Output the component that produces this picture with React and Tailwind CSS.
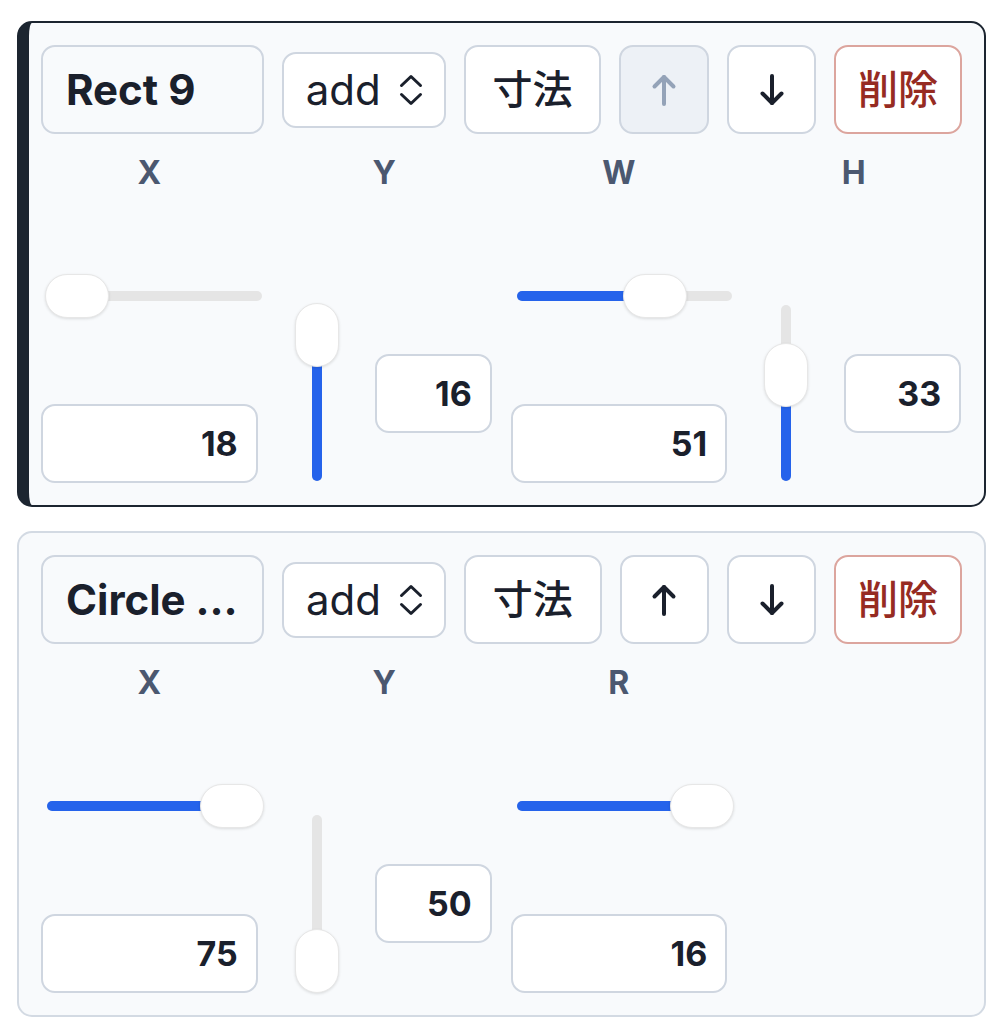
import React from 'react';

const shapes = [
  {
    id: 'rect-9',
    name: 'Rect 9',
    active: true,
    canUp: false,
    fields: [
      { label: 'X', kind: 'h', t: 0, value: 18 },
      { label: 'Y', kind: 'v', t: 1, value: 16 },
      { label: 'W', kind: 'h', t: 0.697, value: 51 },
      { label: 'H', kind: 'v', t: 0.655, value: 33 },
    ],
  },
  {
    id: 'circle-12',
    name: 'Circle 12',
    active: false,
    canUp: true,
    fields: [
      { label: 'X', kind: 'h', t: 1, value: 75 },
      { label: 'Y', kind: 'v', t: 0, value: 50 },
      { label: 'R', kind: 'h', t: 1, value: 16 },
    ],
  },
];

function Arrow({ up }) {
  return (
    <svg width="26" height="34" viewBox="0 0 26 34" fill="none" stroke="currentColor" strokeWidth="4" strokeLinecap="round" strokeLinejoin="round">
      {up ? (
        <>
          <path d="M13 31V4" />
          <path d="M3.5 13.5L13 4l9.5 9.5" />
        </>
      ) : (
        <>
          <path d="M13 3v27" />
          <path d="M3.5 20.5L13 30l9.5-9.5" />
        </>
      )}
    </svg>
  );
}

function UpDown() {
  return (
    <svg width="24" height="32" viewBox="0 0 24 32" fill="none" stroke="currentColor" strokeWidth="3" strokeLinecap="round" strokeLinejoin="round">
      <path d="M2.5 11.5L12 2.5l9.5 9" />
      <path d="M2.5 20.5L12 29.5l9.5-9" />
    </svg>
  );
}

// horizontal range: thumb travels 155px (219 - 64)
function HSlider({ t }) {
  const left = t * 155;
  return (
    <div className="relative ml-[4px] h-[44px] w-[219px]">
      <div className="absolute left-[2px] right-[2px] top-[17px] h-[10px] rounded-full bg-[#e5e5e5]" />
      <div className="absolute left-[2px] top-[17px] h-[10px] rounded-full bg-[#2563eb]" style={{ width: left + 30 }} />
      <div
        className="absolute top-0 h-[44px] w-[64px] rounded-full border border-[#e7e7e7] bg-white shadow-[0_1px_3px_rgba(0,0,0,0.12)]"
        style={{ left }}
      />
    </div>
  );
}

// vertical range: thumb travels 116px (180 - 64)
function VSlider({ t }) {
  const top = (1 - t) * 116;
  return (
    <div className="relative h-[180px] w-[44px] shrink-0">
      <div className="absolute bottom-[2px] left-[17px] top-[2px] w-[10px] rounded-full bg-[#e5e5e5]" />
      <div className="absolute bottom-[2px] left-[17px] w-[10px] rounded-full bg-[#2563eb]" style={{ top: top + 32 }} />
      <div
        className="absolute left-0 h-[64px] w-[44px] rounded-full border border-[#e7e7e7] bg-white shadow-[0_1px_3px_rgba(0,0,0,0.12)]"
        style={{ top }}
      />
    </div>
  );
}

function NumBox({ value, className }) {
  return (
    <input
      readOnly
      value={value}
      className={`h-[79px] rounded-[14px] border-2 border-[#cfd6e0] bg-white pr-[18px] text-right text-[34px] font-bold text-[#1a202c] outline-none ${className}`}
    />
  );
}

function Field({ field }) {
  return (
    <div className="flex flex-col">
      <div className="flex h-[40px] items-center justify-center text-[32px] font-bold text-[#4b5870]">
        {field.label}
      </div>
      <div className="flex h-[290px] flex-col justify-end">
        {field.kind === 'h' ? (
          <>
            <HSlider t={field.t} />
            <div className="h-[86px]" />
            <NumBox value={field.value} className="w-full" />
          </>
        ) : (
          <div className="flex h-[180px] items-center gap-[36px] pl-[19px]">
            <VSlider t={field.t} />
            <NumBox value={field.value} className="w-[117px]" />
          </div>
        )}
      </div>
    </div>
  );
}

function ShapeCard({ shape }) {
  const frame = shape.active
    ? 'border-2 border-l-[12px] border-[#1c2530] pl-[12px]'
    : 'border-2 border-[#d3dae3] pl-[22px]';

  return (
    <div className={`rounded-[15px] bg-[#f8fafc] py-[22px] pr-[22px] ${frame}`}>
      <div className="flex items-center gap-[18px]">
        <div className="flex h-[89px] w-[223px] items-center rounded-[14px] border-2 border-[#cfd6e0] bg-[#f8fafc] px-[23px]">
          <span className="truncate text-[42px] font-bold text-[#1a202c]">{shape.name}</span>
        </div>
        <div className="flex h-[76px] w-[164px] items-center justify-between rounded-[14px] border-2 border-[#cfd6e0] bg-white pl-[22px] pr-[21px] text-[#1a202c]">
          <span className="text-[42px]">add</span>
          <UpDown />
        </div>
        <button className="flex h-[89px] w-[138px] items-center justify-center rounded-[14px] border-2 border-[#cfd6e0] bg-white text-[40px] font-medium text-[#1a202c]">
          寸法
        </button>
        <button
          className={`flex h-[89px] w-[90px] items-center justify-center rounded-[14px] border-2 border-[#cfd6e0] ${
            shape.canUp ? 'bg-white text-[#1a202c]' : 'bg-[#edf1f6] text-[#94a3b8]'
          }`}
        >
          <Arrow up />
        </button>
        <button className="flex h-[89px] w-[89px] items-center justify-center rounded-[14px] border-2 border-[#cfd6e0] bg-white text-[#1a202c]">
          <Arrow />
        </button>
        <button className="flex h-[89px] w-[128px] items-center justify-center rounded-[14px] border-2 border-[#dca59e] bg-white text-[40px] font-medium text-[#962b22]">
          削除
        </button>
      </div>
      <div className="mt-[19px] grid grid-cols-4 gap-x-[18px]">
        {shape.fields.map((f) => (
          <Field key={f.label} field={f} />
        ))}
      </div>
    </div>
  );
}

export default function App() {
  return (
    <div className="min-h-screen bg-white px-[17px] pb-[8px] pt-[21px] font-['Inter','Noto_Sans_CJK_JP',sans-serif]">
      <div className="flex flex-col gap-[24px]">
        {shapes.map((s) => (
          <ShapeCard key={s.id} shape={s} />
        ))}
      </div>
    </div>
  );
}
